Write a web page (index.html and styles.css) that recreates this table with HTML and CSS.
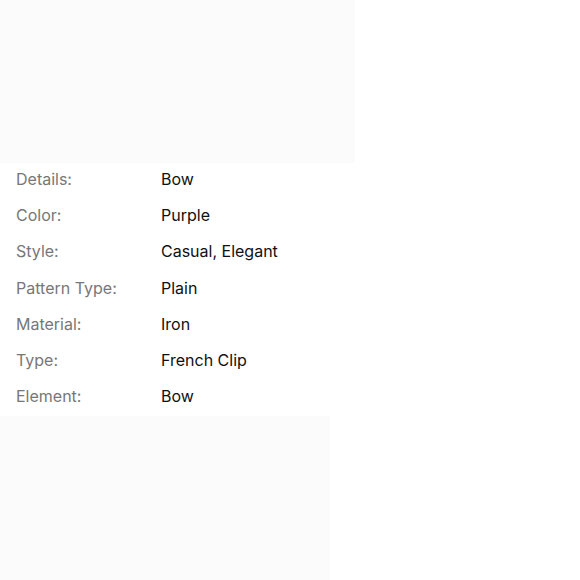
FILE: index.html
```html
<!DOCTYPE html>
<html>
<head>
<meta charset="utf-8">
<link rel="stylesheet" href="styles.css">
</head>
<body>
<div class="page">
  <div class="shade shade-top"></div>
  <dl class="specs">
    <div class="row"><dt>Details:</dt><dd>Bow</dd></div>
    <div class="row"><dt>Color:</dt><dd>Purple</dd></div>
    <div class="row"><dt>Style:</dt><dd>Casual, Elegant</dd></div>
    <div class="row"><dt>Pattern Type:</dt><dd>Plain</dd></div>
    <div class="row"><dt>Material:</dt><dd>Iron</dd></div>
    <div class="row"><dt>Type:</dt><dd>French Clip</dd></div>
    <div class="row"><dt>Element:</dt><dd>Bow</dd></div>
  </dl>
  <div class="shade shade-bottom"></div>
</div>
</body>
</html>
```
FILE: styles.css
```css
html, body {
  margin: 0;
  padding: 0;
  background: #ffffff;
}
.page {
  width: 580px;
  height: 580px;
  overflow: hidden;
  font-family: Inter, "Liberation Sans", Arial, sans-serif;
}
.shade {
  background: #fbfbfb;
}
.shade-top {
  width: 355px;
  height: 163px;
}
.shade-bottom {
  width: 330px;
  height: 164px;
}
.specs {
  margin: 0;
  padding: 0;
  display: flex;
  flex-direction: column;
}
.row {
  display: flex;
  align-items: center;
  box-sizing: border-box;
  height: 36.2px;
  padding-bottom: 4px;
  font-size: 16px;
}
.row dt {
  width: 145px;
  padding-left: 16px;
  color: #777777;
}
.row dd {
  margin: 0;
  color: #111111;
}
```
